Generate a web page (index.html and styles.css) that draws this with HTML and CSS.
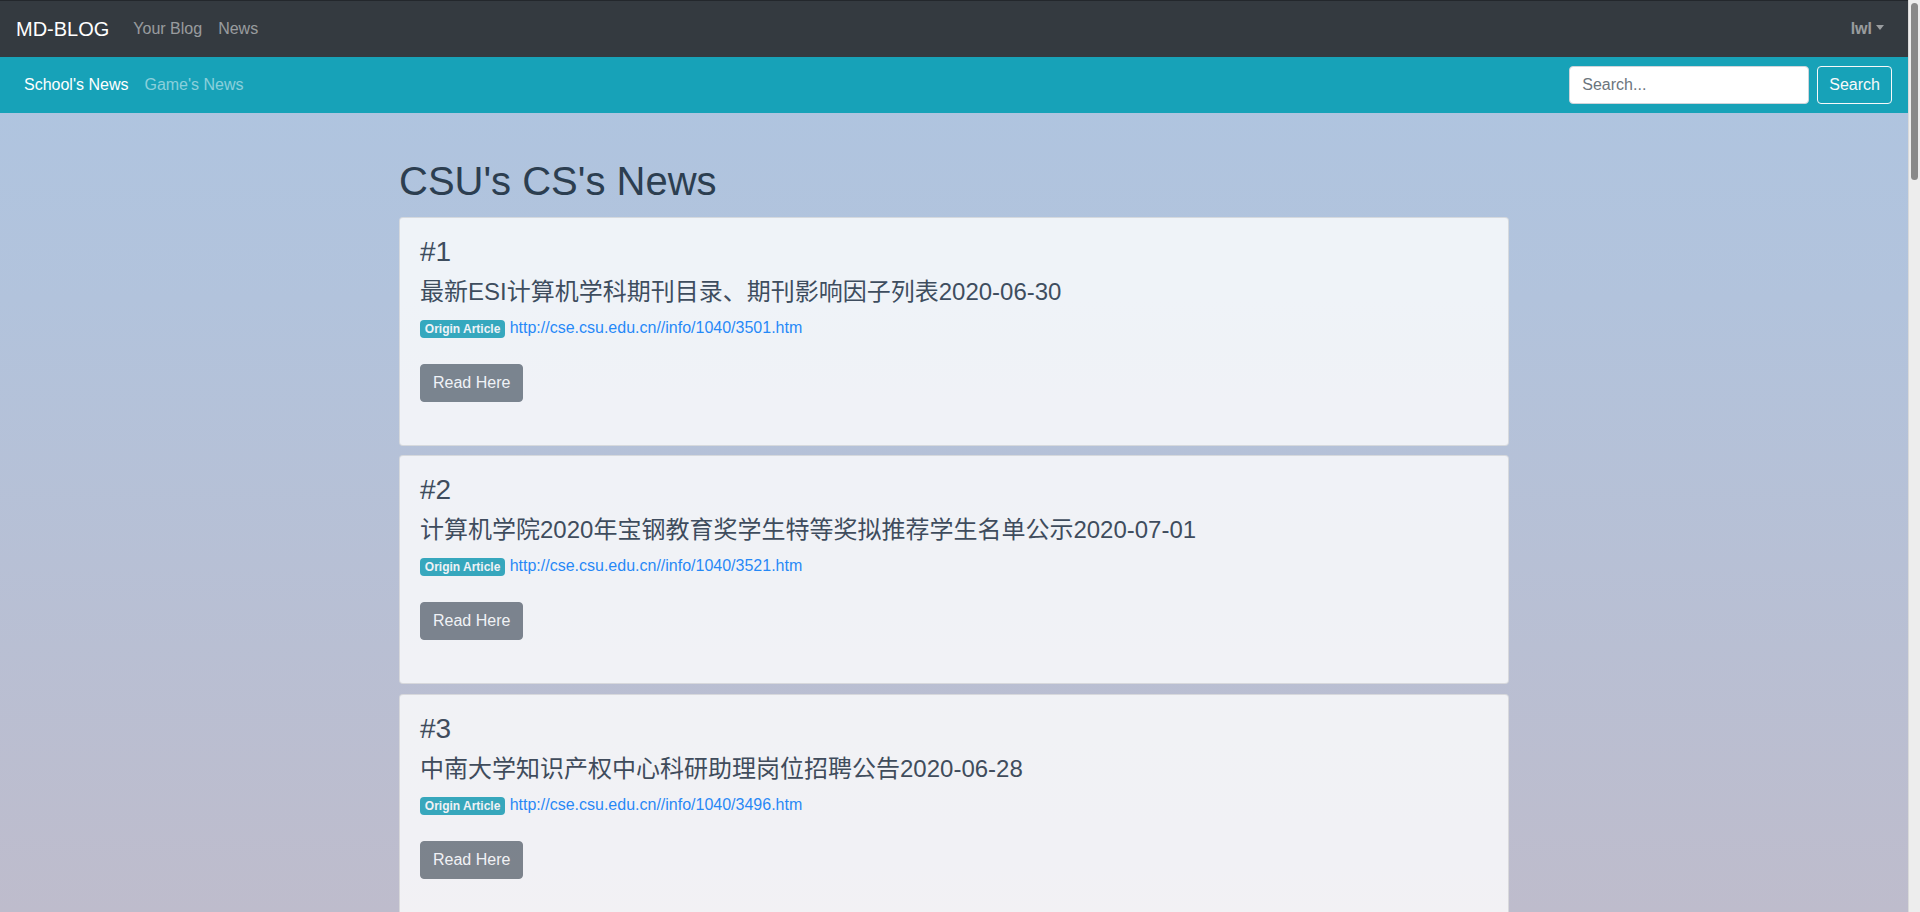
FILE: index.html
```html
<!DOCTYPE html>
<html lang="zh-CN">
<head>
<meta charset="utf-8">
<title>MD-BLOG</title>
<link rel="stylesheet" href="styles.css">
</head>
<body>
<div class="page">
<nav class="navbar navbar-dark">
  <a class="brand" href="#">MD-BLOG</a>
  <ul class="nav">
    <li><a class="nav-link" href="#">Your Blog</a></li>
    <li><a class="nav-link" href="#">News</a></li>
  </ul>
  <ul class="nav nav-right">
    <li><a class="nav-link user" href="#">lwl<span class="caret"></span></a></li>
  </ul>
</nav>
<nav class="navbar navbar-info">
  <ul class="nav">
    <li><a class="nav-link active" href="#">School's News</a></li>
    <li><a class="nav-link" href="#">Game's News</a></li>
  </ul>
  <form class="search">
    <input class="search-input" type="text" placeholder="Search...">
    <button class="btn-outline" type="button">Search</button>
  </form>
</nav>
<main class="container">
  <h1 class="page-title">CSU's CS's News</h1>

  <div class="card"><div class="card-body">
    <h3 class="num">#1</h3>
    <h4 class="title">最新ESI计算机学科期刊目录、期刊影响因子列表2020-06-30</h4>
    <p class="meta"><span class="badge">Origin Article</span> <a href="#">http://cse.csu.edu.cn//info/1040/3501.htm</a></p>
    <a class="btn" href="#">Read Here</a>
  </div></div>

  <div class="card"><div class="card-body">
    <h3 class="num">#2</h3>
    <h4 class="title">计算机学院2020年宝钢教育奖学生特等奖拟推荐学生名单公示2020-07-01</h4>
    <p class="meta"><span class="badge">Origin Article</span> <a href="#">http://cse.csu.edu.cn//info/1040/3521.htm</a></p>
    <a class="btn" href="#">Read Here</a>
  </div></div>

  <div class="card"><div class="card-body">
    <h3 class="num">#3</h3>
    <h4 class="title">中南大学知识产权中心科研助理岗位招聘公告2020-06-28</h4>
    <p class="meta"><span class="badge">Origin Article</span> <a href="#">http://cse.csu.edu.cn//info/1040/3496.htm</a></p>
    <a class="btn" href="#">Read Here</a>
  </div></div>

  <div class="card"><div class="card-body">
    <h3 class="num">#4</h3>
    <h4 class="title">计算机学院2020届毕业生离校工作安排2020-06-24</h4>
    <p class="meta"><span class="badge">Origin Article</span> <a href="#">http://cse.csu.edu.cn//info/1040/3490.htm</a></p>
    <a class="btn" href="#">Read Here</a>
  </div></div>

  <div class="card"><div class="card-body">
    <h3 class="num">#5</h3>
    <h4 class="title">计算机学院2020年研究生招生复试结果公示2020-06-20</h4>
    <p class="meta"><span class="badge">Origin Article</span> <a href="#">http://cse.csu.edu.cn//info/1040/3482.htm</a></p>
    <a class="btn" href="#">Read Here</a>
  </div></div>

  <div class="card"><div class="card-body">
    <h3 class="num">#6</h3>
    <h4 class="title">关于开展2020年暑期社会实践活动的通知2020-06-18</h4>
    <p class="meta"><span class="badge">Origin Article</span> <a href="#">http://cse.csu.edu.cn//info/1040/3475.htm</a></p>
    <a class="btn" href="#">Read Here</a>
  </div></div>

  <div class="card"><div class="card-body">
    <h3 class="num">#7</h3>
    <h4 class="title">计算机学院本科生转专业考核安排2020-06-15</h4>
    <p class="meta"><span class="badge">Origin Article</span> <a href="#">http://cse.csu.edu.cn//info/1040/3468.htm</a></p>
    <a class="btn" href="#">Read Here</a>
  </div></div>

  <div class="card"><div class="card-body">
    <h3 class="num">#8</h3>
    <h4 class="title">计算机学院学术报告会通知2020-06-12</h4>
    <p class="meta"><span class="badge">Origin Article</span> <a href="#">http://cse.csu.edu.cn//info/1040/3461.htm</a></p>
    <a class="btn" href="#">Read Here</a>
  </div></div>

  <div class="card"><div class="card-body">
    <h3 class="num">#9</h3>
    <h4 class="title">2020年优秀学生干部评选结果公示2020-06-10</h4>
    <p class="meta"><span class="badge">Origin Article</span> <a href="#">http://cse.csu.edu.cn//info/1040/3455.htm</a></p>
    <a class="btn" href="#">Read Here</a>
  </div></div>

  <div class="card"><div class="card-body">
    <h3 class="num">#10</h3>
    <h4 class="title">计算机学院实验室安全检查工作通知2020-06-08</h4>
    <p class="meta"><span class="badge">Origin Article</span> <a href="#">http://cse.csu.edu.cn//info/1040/3449.htm</a></p>
    <a class="btn" href="#">Read Here</a>
  </div></div>

  <div class="card"><div class="card-body">
    <h3 class="num">#11</h3>
    <h4 class="title">关于2020年本科毕业设计答辩工作的安排2020-06-05</h4>
    <p class="meta"><span class="badge">Origin Article</span> <a href="#">http://cse.csu.edu.cn//info/1040/3442.htm</a></p>
    <a class="btn" href="#">Read Here</a>
  </div></div>

  <div class="card"><div class="card-body">
    <h3 class="num">#12</h3>
    <h4 class="title">计算机学院研究生学位论文答辩安排2020-06-02</h4>
    <p class="meta"><span class="badge">Origin Article</span> <a href="#">http://cse.csu.edu.cn//info/1040/3436.htm</a></p>
    <a class="btn" href="#">Read Here</a>
  </div></div>

  <div class="card"><div class="card-body">
    <h3 class="num">#13</h3>
    <h4 class="title">2020年国家奖学金推荐名单公示2020-05-29</h4>
    <p class="meta"><span class="badge">Origin Article</span> <a href="#">http://cse.csu.edu.cn//info/1040/3430.htm</a></p>
    <a class="btn" href="#">Read Here</a>
  </div></div>

  <div class="card"><div class="card-body">
    <h3 class="num">#14</h3>
    <h4 class="title">计算机学院教师招聘公告2020-05-26</h4>
    <p class="meta"><span class="badge">Origin Article</span> <a href="#">http://cse.csu.edu.cn//info/1040/3424.htm</a></p>
    <a class="btn" href="#">Read Here</a>
  </div></div>

  <div class="card"><div class="card-body">
    <h3 class="num">#15</h3>
    <h4 class="title">关于做好2020年春季学期返校工作的通知2020-05-22</h4>
    <p class="meta"><span class="badge">Origin Article</span> <a href="#">http://cse.csu.edu.cn//info/1040/3418.htm</a></p>
    <a class="btn" href="#">Read Here</a>
  </div></div>

  <div class="card"><div class="card-body">
    <h3 class="num">#16</h3>
    <h4 class="title">计算机学院程序设计竞赛获奖名单2020-05-18</h4>
    <p class="meta"><span class="badge">Origin Article</span> <a href="#">http://cse.csu.edu.cn//info/1040/3411.htm</a></p>
    <a class="btn" href="#">Read Here</a>
  </div></div>

  <div class="card"><div class="card-body">
    <h3 class="num">#17</h3>
    <h4 class="title">计算机学院党支部工作会议纪要2020-05-15</h4>
    <p class="meta"><span class="badge">Origin Article</span> <a href="#">http://cse.csu.edu.cn//info/1040/3405.htm</a></p>
    <a class="btn" href="#">Read Here</a>
  </div></div>

  <div class="card"><div class="card-body">
    <h3 class="num">#18</h3>
    <h4 class="title">2020年大学生创新创业训练计划项目立项公示2020-05-12</h4>
    <p class="meta"><span class="badge">Origin Article</span> <a href="#">http://cse.csu.edu.cn//info/1040/3398.htm</a></p>
    <a class="btn" href="#">Read Here</a>
  </div></div>

  <div class="card"><div class="card-body">
    <h3 class="num">#19</h3>
    <h4 class="title">计算机学院线上教学工作总结2020-05-08</h4>
    <p class="meta"><span class="badge">Origin Article</span> <a href="#">http://cse.csu.edu.cn//info/1040/3392.htm</a></p>
    <a class="btn" href="#">Read Here</a>
  </div></div>
</main>
</div>
<div class="scrollbar"><div class="scroll-thumb"></div></div>
</body>
</html>
```

FILE: styles.css
```css
* { box-sizing: border-box; }

body {
  margin: 0;
  display: flex;
  align-items: flex-start;
  font-family: "Liberation Sans", Arial, "Noto Sans CJK SC", sans-serif;
  font-size: 16px;
  line-height: 1.5;
  color: #2c3e50;
  background: linear-gradient(to bottom, #aec5e1 0px, #b2c3dc 300px, #bebccc 912px) fixed;
}

.page {
  flex: 1;
  min-width: 0;
}

.scrollbar {
  flex: none;
  width: 12px;
  height: 100vh;
  position: sticky;
  top: 0;
  background: #ededed;
  border-left: 1px solid #dadada;
  padding: 3px 2px 0 2px;
}

.scroll-thumb {
  width: 7px;
  height: 177px;
  border-radius: 4px;
  background: #898989;
}

a { text-decoration: none; }

.navbar {
  display: flex;
  align-items: center;
  padding: 8px 16px;
  height: 56px;
}

.navbar-dark {
  background: #343a40;
  border-top: 1px solid #23272c;
  height: 57px;
}

.navbar-info {
  background: #17a2b8;
}

.brand {
  font-size: 20px;
  line-height: 30px;
  padding: 5px 0;
  margin-right: 16px;
  color: #fff;
}

.nav {
  display: flex;
  list-style: none;
  margin: 0;
  padding: 0;
}

.nav-right { margin-left: auto; }

.nav-link {
  display: block;
  padding: 8px;
  line-height: 24px;
  color: rgba(255, 255, 255, 0.5);
}

.nav-link.active { color: #fff; }

.user { font-weight: bold; }

.caret {
  display: inline-block;
  margin-left: 4px;
  vertical-align: 4px;
  border-top: 5px solid;
  border-left: 4.5px solid transparent;
  border-right: 4.5px solid transparent;
}

.search {
  display: flex;
  align-items: center;
  margin-left: auto;
}

.search-input {
  width: 240px;
  height: 38px;
  padding: 6px 12px;
  font-family: inherit;
  font-size: 16px;
  color: #495057;
  background: #fff;
  border: 1px solid #ced4da;
  border-radius: 4px;
  margin-right: 8px;
  outline: none;
}

.search-input::placeholder { color: #6c757d; }

.btn-outline {
  height: 38px;
  padding: 6px 11px;
  font-family: inherit;
  font-size: 16px;
  line-height: 24px;
  color: #f8f9fa;
  background: transparent;
  border: 1px solid #f8f9fa;
  border-radius: 4px;
}

.container {
  max-width: 1140px;
  margin: 0 auto;
  padding: 44px 15px 0;
}

.page-title {
  margin: 0 0 12px;
  font-size: 40px;
  line-height: 48px;
  font-weight: 400;
  color: #2c3e50;
}

.card {
  background: #fff;
  border: 1px solid rgba(0, 0, 0, 0.125);
  border-radius: 4px;
  opacity: 0.8;
  margin-bottom: 9.7px;
  color: #22303f;
}

.card-body {
  padding: 20px 20px 43px;
}

.num {
  margin: 0 0 12px;
  font-size: 28px;
  line-height: 28px;
  font-weight: 400;
}

.title {
  margin: 0 0 9px;
  font-size: 24px;
  line-height: 28.8px;
  font-weight: 400;
}

.meta {
  margin: 0 0 24px;
  line-height: 24px;
}

.meta a { color: #007bff; }

.badge {
  display: inline-block;
  padding: 3px 4.8px;
  font-size: 12px;
  font-weight: 700;
  line-height: 1;
  color: #fff;
  background: #17a2b8;
  border-radius: 4px;
}

.btn {
  display: inline-block;
  height: 38px;
  padding: 6px 12px;
  font-size: 16px;
  line-height: 24px;
  color: #fff;
  background: #6c757d;
  border: 1px solid #6c757d;
  border-radius: 4px;
}
```
